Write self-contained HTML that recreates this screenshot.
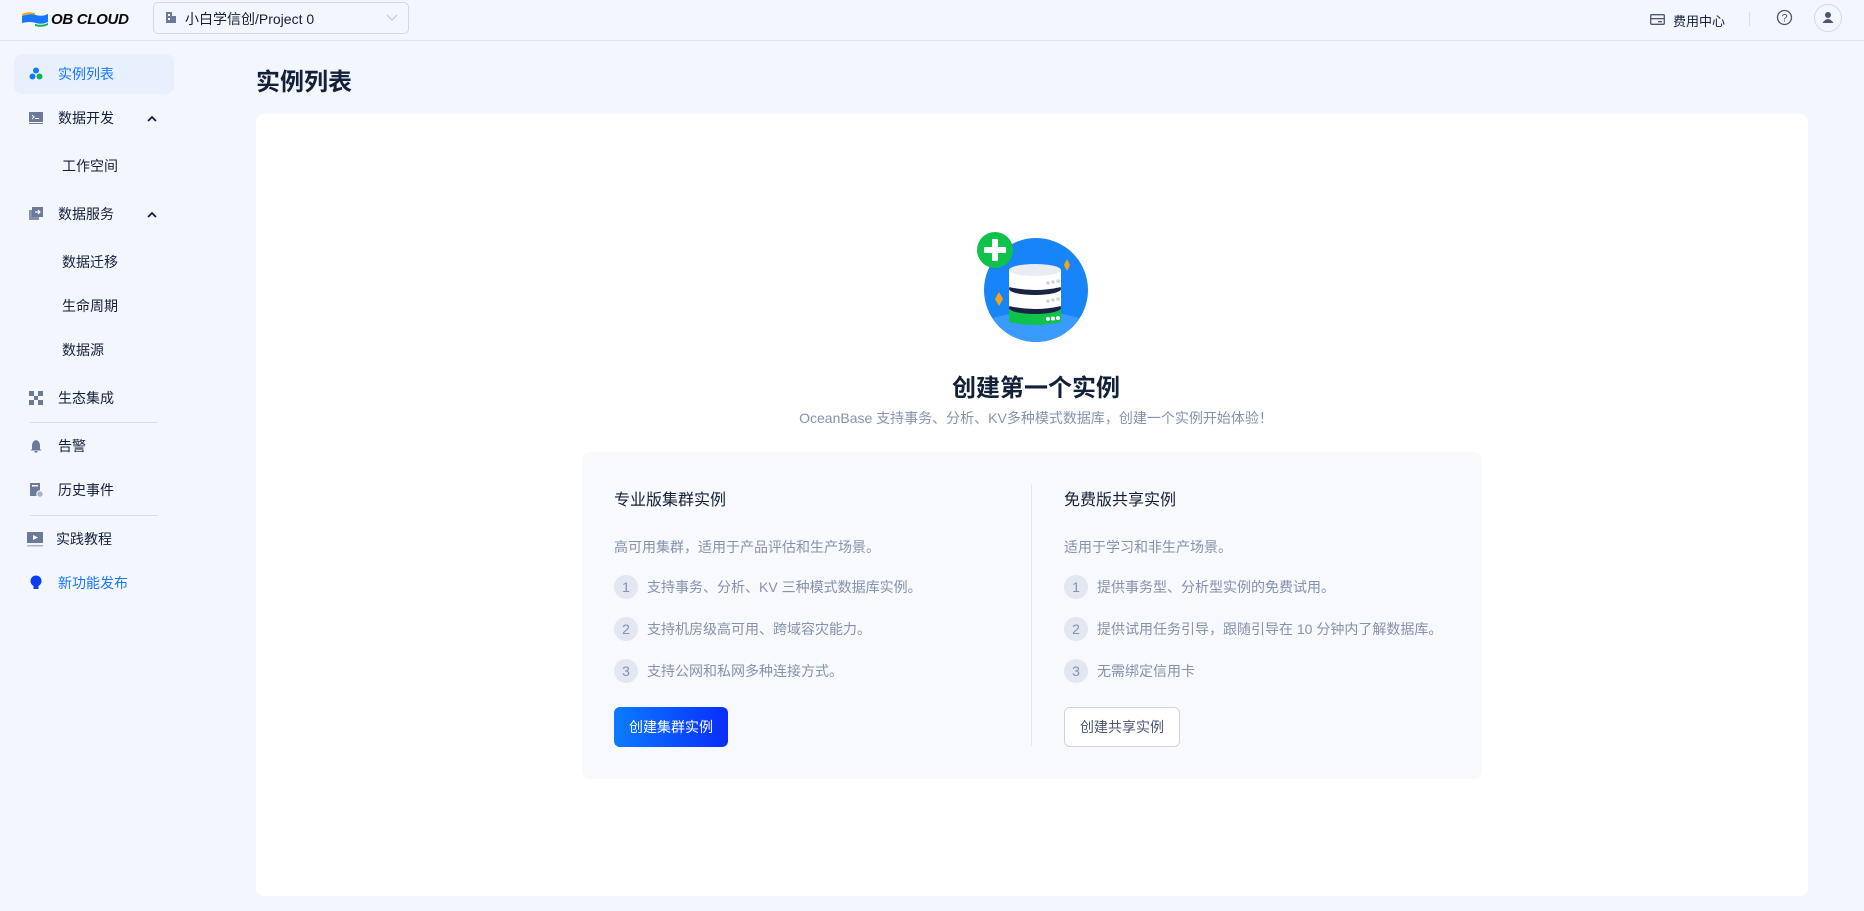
<!DOCTYPE html>
<html><head><meta charset="utf-8"><style>
*{margin:0;padding:0;box-sizing:border-box}
body{width:1864px;height:911px;overflow:hidden;background:#f3f6fd;font-family:"Liberation Sans","Noto Sans CJK SC",sans-serif;color:#132039;position:relative}
.abs{position:absolute}
.hdr{left:0;top:0;width:1864px;height:41px;border-bottom:1px solid #e0e5ee;background:#f3f6fd}
.nav{font-size:14px;color:#132039;display:flex;align-items:center;height:20px}
.sub{font-size:14px;color:#132039}
.item{font-size:14px;color:#8592ad;display:flex;align-items:center}
.num{width:24px;height:24px;border-radius:50%;background:#e2e7f2;color:#8592ad;font-size:14px;display:flex;align-items:center;justify-content:center;margin-right:9px}
</style></head><body>
<div class="abs hdr"></div>
<svg class="abs" style="left:22px;top:11px" width="26" height="17" viewBox="0 0 26 17"><path d="M0 3 Q6 0 13 2 L13 4 Q6 2 0 5Z" fill="#f5a623"/><path d="M0 5 Q8 2 14 4 Q20 6 26 3 L26 11 Q20 14 14 12 Q8 10 0 12Z" fill="#1677ff"/><path d="M13 13 Q20 15 26 12 L26 14 Q20 17 13 15Z" fill="#10b450"/></svg>
<div class="abs" style="left:51px;top:11px;font-size:15px;font-weight:900;font-style:italic;letter-spacing:-0.3px;color:#0a0a0a">OB CLOUD</div>
<div class="abs" style="left:153px;top:2px;width:256px;height:32px;border:1px solid #d4d9e6;border-radius:5px;background:#f3f6fd"></div>
<svg class="abs" style="left:165px;top:11px" width="12" height="13" viewBox="0 0 12 13"><rect x="1" y="1" width="6" height="11" fill="#6b7a99"/><rect x="7" y="5" width="4" height="7" fill="#6b7a99"/><rect x="3" y="3" width="2" height="2" fill="#f3f6fd"/><rect x="3" y="7" width="2" height="2" fill="#f3f6fd"/></svg>
<div class="abs" style="left:185px;top:9px;font-size:14px;color:#132039">小白学信创/Project 0</div>
<svg class="abs" style="left:386px;top:14px" width="12" height="7"><path d="M1 1 L6 6 L11 1" fill="none" stroke="#c0c6d4" stroke-width="1.2"/></svg>
<svg class="abs" style="left:1650px;top:14px" width="15" height="11"><rect x="0.7" y="0.7" width="13.6" height="9.6" rx="1" fill="none" stroke="#4a5672" stroke-width="1.3"/><rect x="1" y="4" width="13" height="1.3" fill="#4a5672"/><rect x="8" y="7" width="4" height="1.3" fill="#4a5672"/></svg>
<div class="abs" style="left:1673px;top:11px;font-size:13px;color:#132039">费用中心</div>
<div class="abs" style="left:1749px;top:12px;width:1px;height:14px;background:#d8dde7"></div>
<svg class="abs" style="left:1776px;top:9px" width="17" height="17"><circle cx="8.5" cy="8.5" r="7" fill="none" stroke="#4a5672" stroke-width="1.3"/><text x="8.5" y="12.5" font-size="11" text-anchor="middle" fill="#4a5672" font-family="Liberation Sans">?</text></svg>
<div class="abs" style="left:1814px;top:4px;width:28px;height:28px;border-radius:50%;border:1px solid #d4d9e6"></div>
<svg class="abs" style="left:1822px;top:11px" width="12" height="13"><circle cx="6" cy="4" r="3" fill="#4a5672"/><path d="M0.5 12 Q6 4 11.5 12Z" fill="#4a5672"/></svg>
<div class="abs" style="left:14px;top:54px;width:160px;height:40px;border-radius:8px;background:#e8effd"></div>
<svg class="abs" style="left:29px;top:67px" width="14" height="13"><circle cx="7" cy="3.5" r="3" fill="#1677ff"/><circle cx="3.5" cy="9.5" r="3" fill="#1677ff"/><circle cx="10.5" cy="9.5" r="3" fill="#10b450"/></svg>
<div class="abs nav" style="left:58px;top:64px;color:#1677ff">实例列表</div>
<svg class="abs" style="left:29px;top:112px" width="14" height="12"><rect x="0" y="0" width="14" height="10" fill="#6b7a99"/><path d="M3 3 L5 5 L3 7" stroke="#fff" fill="none"/><rect x="6" y="6" width="4" height="1" fill="#fff"/><rect x="0" y="11" width="14" height="1" fill="#6b7a99"/></svg>
<div class="abs nav" style="left:58px;top:108px">数据开发</div>
<svg class="abs" style="left:147px;top:115px" width="10" height="7"><path d="M1 6 L5 2 L9 6" stroke="#132039" stroke-width="1.8" fill="none"/></svg>
<div class="abs sub" style="left:62px;top:156px">工作空间</div>
<svg class="abs" style="left:29px;top:207px" width="14" height="14"><rect x="0" y="3" width="10" height="10" fill="#8592ad"/><rect x="3" y="0" width="11" height="10" fill="#6b7a99"/><path d="M6 5 L11 5 M9 3 L11 5 L9 7" stroke="#fff" fill="none" stroke-width="1.2"/></svg>
<div class="abs nav" style="left:58px;top:204px">数据服务</div>
<svg class="abs" style="left:147px;top:211px" width="10" height="7"><path d="M1 6 L5 2 L9 6" stroke="#132039" stroke-width="1.8" fill="none"/></svg>
<div class="abs sub" style="left:62px;top:252px">数据迁移</div>
<div class="abs sub" style="left:62px;top:296px">生命周期</div>
<div class="abs sub" style="left:62px;top:340px">数据源</div>
<svg class="abs" style="left:29px;top:391px" width="14" height="14" fill="#6b7a99"><rect x="0" y="0" width="5" height="5"/><rect x="9" y="0" width="5" height="5"/><rect x="0" y="9" width="5" height="5"/><rect x="9" y="9" width="5" height="5"/><rect x="5" y="5" width="4" height="4"/></svg>
<div class="abs nav" style="left:58px;top:388px">生态集成</div>
<div class="abs" style="left:30px;top:422px;width:128px;height:1px;background:#d8dfeb"></div>
<svg class="abs" style="left:30px;top:439px" width="12" height="14"><path d="M6 1 Q10 2 10 7 L10 10 L11.5 11.5 L0.5 11.5 L2 10 L2 7 Q2 2 6 1Z" fill="#6b7a99"/><rect x="4.5" y="12" width="3" height="1.5" fill="#6b7a99"/></svg>
<div class="abs nav" style="left:58px;top:436px">告警</div>
<svg class="abs" style="left:29px;top:483px" width="14" height="14"><rect x="1" y="0" width="10" height="13" fill="#6b7a99"/><rect x="3" y="2" width="6" height="1.5" fill="#fff"/><circle cx="11" cy="11" r="3.3" fill="#aab3c7" stroke="#fff"/></svg>
<div class="abs nav" style="left:58px;top:480px">历史事件</div>
<div class="abs" style="left:30px;top:515px;width:128px;height:1px;background:#d8dfeb"></div>
<svg class="abs" style="left:27px;top:532px" width="16" height="15"><rect x="0" y="0" width="16" height="11" fill="#6b7a99"/><path d="M6 3 L11 5.5 L6 8Z" fill="#fff"/><rect x="0" y="13" width="16" height="1.5" fill="#aab3c7"/></svg>
<div class="abs nav" style="left:56px;top:529px">实践教程</div>
<svg class="abs" style="left:30px;top:575px" width="12" height="16"><circle cx="6" cy="6" r="5.5" fill="#0a3cf5"/><rect x="3.5" y="10" width="5" height="4" fill="#0a3cf5"/></svg>
<div class="abs nav" style="left:58px;top:573px;color:#1677ff">新功能发布</div>
<div class="abs" style="left:256px;top:62px;font-size:24px;font-weight:bold;color:#132039">实例列表</div>
<div class="abs" style="left:256px;top:114px;width:1552px;height:782px;background:#fff;border-radius:8px"></div>
<svg class="abs" style="left:975px;top:228px" width="120" height="120" viewBox="0 0 120 120">
<defs><clipPath id="c"><circle cx="61" cy="62" r="52"/></clipPath></defs>
<circle cx="61" cy="62" r="52" fill="#1784f7"/>
<ellipse cx="61" cy="122" rx="80" ry="38" fill="#3a9bff" clip-path="url(#c)"/>
<ellipse cx="50" cy="89" rx="13" ry="4.5" fill="#0d1a3a"/>
<path d="M34 80 L34 94 Q60 100 86 94 L86 80Z" fill="#10c14a"/>
<ellipse cx="60" cy="80" rx="26" ry="6" fill="#1a2340"/>
<path d="M34 61 L34 78 Q60 84 86 78 L86 61Z" fill="#fff"/>
<ellipse cx="60" cy="61" rx="26" ry="6" fill="#1a2340"/>
<path d="M34 42 L34 59 Q60 65 86 59 L86 42Z" fill="#fff"/>
<ellipse cx="60" cy="42" rx="26" ry="6" fill="#e9ecf2"/>
<g fill="#d0d4dc"><circle cx="73" cy="55" r="1.8"/><circle cx="78" cy="54" r="1.8"/><circle cx="83" cy="53" r="1.8"/><circle cx="73" cy="73" r="1.8"/><circle cx="78" cy="72" r="1.8"/><circle cx="83" cy="71" r="1.8"/></g>
<g fill="#fff"><circle cx="73" cy="91" r="2"/><circle cx="78" cy="90.5" r="2"/><circle cx="83" cy="90" r="2"/></g>
<path d="M92 31 L95 37 L92 43 L89 37Z" fill="#f7a21b"/>
<path d="M24 64 L28 71 L24 78 L20 71Z" fill="#f7a21b"/>
<circle cx="20" cy="22" r="18" fill="#10c14a"/>
<rect x="17" y="11" width="6" height="22" rx="1" fill="#fff"/><rect x="9" y="19" width="22" height="6" rx="1" fill="#fff"/>
</svg>
<div class="abs" style="left:836px;top:368px;width:400px;text-align:center;font-size:24px;font-weight:bold;color:#132039">创建第一个实例</div>
<div class="abs" style="left:736px;top:408px;width:600px;text-align:center;font-size:14px;color:#8592ad">OceanBase 支持事务、分析、KV多种模式数据库，创建一个实例开始体验！</div>
<div class="abs" style="left:582px;top:452px;width:900px;height:327px;background:#f7f9fc;border-radius:8px"></div>
<div class="abs" style="left:1031px;top:484px;width:1px;height:262px;background:#e3e8f0"></div>
<div class="abs" style="left:614px;top:486px;font-size:16px;color:#132039">专业版集群实例</div>
<div class="abs" style="left:614px;top:537px;font-size:14px;color:#8592ad">高可用集群，适用于产品评估和生产场景。</div>
<div class="abs item" style="left:614px;top:575px"><span class="num">1</span>支持事务、分析、KV 三种模式数据库实例。</div>
<div class="abs item" style="left:614px;top:617px"><span class="num">2</span>支持机房级高可用、跨域容灾能力。</div>
<div class="abs item" style="left:614px;top:659px"><span class="num">3</span>支持公网和私网多种连接方式。</div>
<div class="abs" style="left:614px;top:707px;width:114px;height:40px;border-radius:6px;background:linear-gradient(90deg,#0a7cff,#0a2dfa);color:#fff;font-size:14px;display:flex;align-items:center;justify-content:center">创建集群实例</div>
<div class="abs" style="left:1064px;top:486px;font-size:16px;color:#132039">免费版共享实例</div>
<div class="abs" style="left:1064px;top:537px;font-size:14px;color:#8592ad">适用于学习和非生产场景。</div>
<div class="abs item" style="left:1064px;top:575px"><span class="num">1</span>提供事务型、分析型实例的免费试用。</div>
<div class="abs item" style="left:1064px;top:617px"><span class="num">2</span>提供试用任务引导，跟随引导在 10 分钟内了解数据库。</div>
<div class="abs item" style="left:1064px;top:659px"><span class="num">3</span>无需绑定信用卡</div>
<div class="abs" style="left:1064px;top:707px;width:116px;height:40px;border-radius:6px;background:#fff;border:1px solid #cdd3e1;color:#4a5672;font-size:14px;display:flex;align-items:center;justify-content:center">创建共享实例</div>
</body></html>
